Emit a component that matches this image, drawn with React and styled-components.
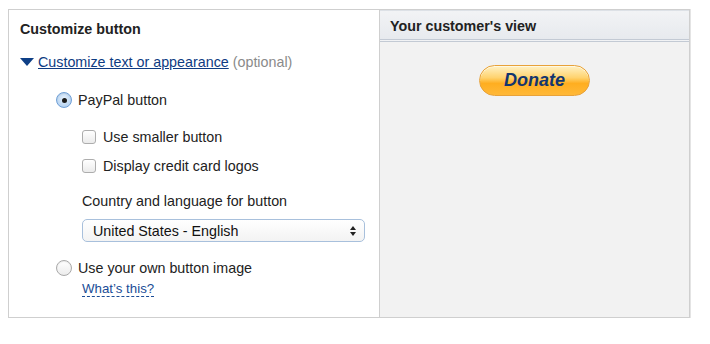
import React from "react";
import styled, { createGlobalStyle } from "styled-components";

const GlobalStyle = createGlobalStyle`
  body {
    margin: 0;
    background: #fff;
    font-family: "Liberation Sans", Arial, Helvetica, sans-serif;
    color: #222;
  }
`;

const Frame = styled.div`
  margin: 9px 0 0 8px;
  width: 682px;
  height: 309px;
  box-sizing: border-box;
  border: 1px solid #cfcfcf;
  box-shadow: 0 1px 0 #e4e4e4, 1px 0 0 #e4e4e4;
  display: grid;
  grid-template-columns: 370px 1fr;
`;

const LeftPanel = styled.div`
  background: #fff;
  padding: 9px 0 0 11px;
  display: flex;
  flex-direction: column;
`;

const RightPanel = styled.div`
  background: #f2f2f2;
  border-left: 1px solid #cfcfcf;
  display: flex;
  flex-direction: column;
`;

const Title = styled.h2`
  margin: 0;
  font-size: 14.3px;
  font-weight: 700;
  line-height: 20px;
  color: #222;
`;

const ToggleRow = styled.div`
  margin-top: 13px;
  display: flex;
  align-items: center;
  height: 20px;
  font-size: 14.3px;
`;

const Caret = styled.span`
  width: 0;
  height: 0;
  border-left: 7px solid transparent;
  border-right: 7px solid transparent;
  border-top: 8px solid #0e3f86;
  margin-right: 4px;
`;

const Link = styled.a`
  color: #0e3b82;
  text-decoration: underline;
  cursor: pointer;
`;

const Muted = styled.span`
  color: #8a8a8a;
  margin-left: 4px;
`;

const OptionRow = styled.label`
  display: flex;
  align-items: center;
  height: 20px;
  margin-top: ${p => p.$gap}px;
  margin-left: ${p => p.$indent}px;
  font-size: 14.3px;
  color: #222;
`;

const Radio = styled.span`
  width: 16px;
  height: 16px;
  border-radius: 50%;
  box-sizing: border-box;
  margin-right: 6px;
  display: flex;
  align-items: center;
  justify-content: center;
  border: 1px solid ${p => (p.$checked ? "#6f9fd6" : "#a9a9a9")};
  background: ${p =>
    p.$checked
      ? "radial-gradient(circle at 50% 40%, #e6f1fc 0%, #b9d5f2 70%, #94bde9 100%)"
      : "linear-gradient(#ffffff, #ececec)"};
  box-shadow: inset 0 1px 1px rgba(0, 0, 0, 0.08);
  &::after {
    content: "";
    display: ${p => (p.$checked ? "block" : "none")};
    width: 5px;
    height: 5px;
    border-radius: 50%;
    background: #1a1a1a;
  }
`;

const Checkbox = styled.span`
  width: 14px;
  height: 14px;
  box-sizing: border-box;
  border: 1px solid #adadad;
  border-radius: 3px;
  background: linear-gradient(#ffffff, #ebebeb);
  margin-right: 7px;
`;

const FieldLabel = styled.div`
  margin: 15px 0 0 62px;
  height: 20px;
  line-height: 20px;
  font-size: 14.3px;
  color: #222;
`;

const Select = styled.div`
  margin: 8px 0 0 62px;
  width: 283px;
  height: 23px;
  box-sizing: border-box;
  border: 1px solid #a8c0dc;
  border-radius: 5px;
  background: linear-gradient(#ffffff, #f3f3f3);
  display: flex;
  align-items: center;
  justify-content: space-between;
  padding: 0 8px 0 10px;
  font-size: 14.3px;
  color: #111;
`;

const Arrows = styled.span`
  display: flex;
  flex-direction: column;
  gap: 2px;
  &::before,
  &::after {
    content: "";
    width: 0;
    height: 0;
    border-left: 3.5px solid transparent;
    border-right: 3.5px solid transparent;
  }
  &::before {
    border-bottom: 4px solid #222;
  }
  &::after {
    border-top: 4px solid #222;
  }
`;

const HelpLink = styled.a`
  margin: 3px 0 0 62px;
  align-self: flex-start;
  font-size: 13.3px;
  line-height: 15px;
  color: #1a4c96;
  border-bottom: 1px dashed #1a4c96;
  cursor: pointer;
`;

const ViewHeader = styled.div`
  height: 26px;
  display: flex;
  align-items: center;
  padding: 2px 0 0 10px;
  font-size: 14.3px;
  font-weight: 700;
  color: #222;
  background: linear-gradient(#f2f3f5, #e7eaee);
  border-top: 1px solid #dde1e6;
  border-bottom: 3px double #c3cad4;
`;

const Preview = styled.div`
  display: flex;
  justify-content: center;
  padding-top: 23px;
`;

const DonateButton = styled.button`
  width: 111px;
  height: 31px;
  border-radius: 16px;
  border: 1px solid #e8a23a;
  background: linear-gradient(#fff1c4 0%, #ffd36f 40%, #ffae20 60%, #ffb838 100%);
  box-shadow: inset 0 1px 0 #fff8e0;
  font-family: "Liberation Sans", Arial, sans-serif;
  font-size: 18px;
  font-weight: 700;
  font-style: italic;
  color: #13356f;
  padding: 0;
  cursor: pointer;
`;

export default function App() {
  return (
    <>
      <GlobalStyle />
      <Frame>
        <LeftPanel>
          <Title>Customize button</Title>
          <ToggleRow>
            <Caret />
            <Link>Customize text or appearance</Link>
            <Muted>(optional)</Muted>
          </ToggleRow>
          <OptionRow $gap={18} $indent={36}>
            <Radio $checked />
            PayPal button
          </OptionRow>
          <OptionRow $gap={17} $indent={62}>
            <Checkbox />
            Use smaller button
          </OptionRow>
          <OptionRow $gap={9} $indent={62}>
            <Checkbox />
            Display credit card logos
          </OptionRow>
          <FieldLabel>Country and language for button</FieldLabel>
          <Select>
            United States - English
            <Arrows />
          </Select>
          <OptionRow $gap={16} $indent={36}>
            <Radio />
            Use your own button image
          </OptionRow>
          <HelpLink>What’s this?</HelpLink>
        </LeftPanel>
        <RightPanel>
          <ViewHeader>Your customer's view</ViewHeader>
          <Preview>
            <DonateButton>Donate</DonateButton>
          </Preview>
        </RightPanel>
      </Frame>
    </>
  );
}
